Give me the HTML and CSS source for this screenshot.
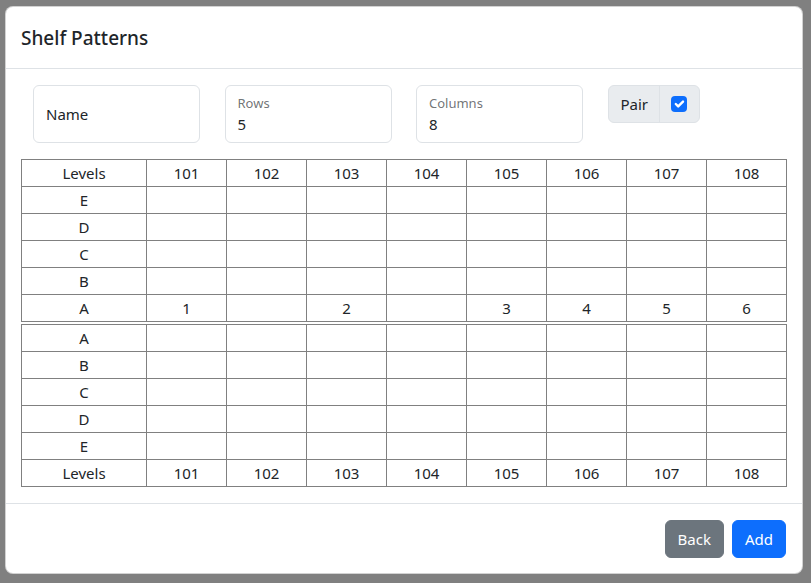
FILE: index.html
```html
<!DOCTYPE html>
<html lang="en">
<head>
<meta charset="utf-8">
<title>Shelf Patterns</title>
<link rel="stylesheet" href="styles.css">
</head>
<body>
<div class="backdrop">
  <div class="modal">
    <div class="modal-header">
      <h5 class="modal-title">Shelf Patterns</h5>
    </div>
    <div class="modal-body">
      <div class="fields">
        <div class="field field-empty"><span class="field-placeholder">Name</span></div>
        <div class="field"><div class="field-label">Rows</div><div class="field-value">5</div></div>
        <div class="field"><div class="field-label">Columns</div><div class="field-value">8</div></div>
        <div class="input-group">
          <span class="group-text">Pair</span>
          <span class="group-check">
            <span class="checkbox">
              <svg viewBox="0 0 20 20" width="16" height="16"><path d="M6 10l3 3 6-6" fill="none" stroke="#fff" stroke-width="3" stroke-linecap="round" stroke-linejoin="round"/></svg>
            </span>
          </span>
        </div>
      </div>
      <table class="shelf">
        <tr><td class="lvl">Levels</td><td>101</td><td>102</td><td>103</td><td>104</td><td>105</td><td>106</td><td>107</td><td>108</td></tr>
        <tr><td class="lvl">E</td><td></td><td></td><td></td><td></td><td></td><td></td><td></td><td></td></tr>
        <tr><td class="lvl">D</td><td></td><td></td><td></td><td></td><td></td><td></td><td></td><td></td></tr>
        <tr><td class="lvl">C</td><td></td><td></td><td></td><td></td><td></td><td></td><td></td><td></td></tr>
        <tr><td class="lvl">B</td><td></td><td></td><td></td><td></td><td></td><td></td><td></td><td></td></tr>
        <tr><td class="lvl">A</td><td>1</td><td></td><td>2</td><td></td><td>3</td><td>4</td><td>5</td><td>6</td></tr>
      </table>
      <table class="shelf shelf-bottom">
        <tr><td class="lvl">A</td><td></td><td></td><td></td><td></td><td></td><td></td><td></td><td></td></tr>
        <tr><td class="lvl">B</td><td></td><td></td><td></td><td></td><td></td><td></td><td></td><td></td></tr>
        <tr><td class="lvl">C</td><td></td><td></td><td></td><td></td><td></td><td></td><td></td><td></td></tr>
        <tr><td class="lvl">D</td><td></td><td></td><td></td><td></td><td></td><td></td><td></td><td></td></tr>
        <tr><td class="lvl">E</td><td></td><td></td><td></td><td></td><td></td><td></td><td></td><td></td></tr>
        <tr><td class="lvl">Levels</td><td>101</td><td>102</td><td>103</td><td>104</td><td>105</td><td>106</td><td>107</td><td>108</td></tr>
      </table>
    </div>
    <div class="modal-footer">
      <button class="btn btn-secondary">Back</button>
      <button class="btn btn-primary">Add</button>
    </div>
  </div>
</div>
</body>
</html>
```

FILE: styles.css
```css
* { box-sizing: border-box; }
html, body { margin: 0; padding: 0; }
body {
  font-family: "Noto Sans", "Open Sans", sans-serif;
  font-size: 16px;
  line-height: 1.5;
  color: #212529;
  background: #808080;
  width: 811px;
  height: 583px;
  overflow: hidden;
}
.backdrop {
  padding: 6px 8px 0 5px;
}
.modal {
  width: 798px;
  height: 568px;
  background: #fff;
  border: 1px solid rgba(0,0,0,.175);
  border-radius: 8px;
  display: flex;
  flex-direction: column;
}
.modal-header {
  padding: 16px 16px 15px 15px;
  border-bottom: 1px solid #dee2e6;
}
.modal-title {
  margin: 0;
  font-size: 19px;
  font-weight: 500;
  line-height: 30px;
  color: #212529;
}
.modal-body {
  padding: 16px 15px 16px 15px;
  flex: 1;
}
.fields {
  display: flex;
  gap: 24.5px;
  padding-left: 12px;
  margin-bottom: 16px;
  align-items: flex-start;
}
.field {
  width: 167px;
  height: 58px;
  border: 1px solid #dee2e6;
  border-radius: 6px;
  padding: 8px 12px 0 12px;
}
.field-empty {
  display: flex;
  align-items: center;
  padding: 0 12px;
}
.field-placeholder { font-size: 15px; }
.field-label {
  font-size: 13px;
  line-height: 18px;
  color: rgba(33,37,41,.65);
}
.field-value {
  font-size: 15px;
  line-height: 24px;
}
.input-group {
  display: flex;
  height: 38px;
  border: 1px solid #dee2e6;
  border-radius: 6px;
  background: #e9ecef;
}
.group-text {
  display: flex;
  align-items: center;
  padding: 0 12px;
  font-size: 15px;
  border-right: 1px solid #dee2e6;
  width: 51px;
}
.group-check {
  display: flex;
  align-items: center;
  padding: 0 12px 0 11px;
}
.checkbox {
  width: 16px;
  height: 16px;
  border-radius: 4px;
  background: #0d6efd;
  display: flex;
}
.shelf {
  width: 766px;
  border-collapse: collapse;
  table-layout: fixed;
  font-size: 15px;
}
.shelf td {
  border: 1px solid #808080;
  height: 27px;
  padding: 0;
  text-align: center;
  width: 80px;
  line-height: 25px;
}
.shelf td.lvl { width: 125px; }
.shelf-bottom { margin-top: 2px; }
.modal-footer {
  border-top: 1px solid #dee2e6;
  padding: 12px;
  display: flex;
  justify-content: flex-end;
  gap: 8px;
}
.btn {
  font-family: inherit;
  font-size: 15px;
  line-height: 24px;
  border: 1px solid transparent;
  border-radius: 6px;
  padding: 6px 12px;
  margin: 4px;
  color: #fff;
  cursor: pointer;
}
.btn + .btn { margin-left: -4px; }
.btn-secondary { background: #6c757d; border-color: #6c757d; }
.btn-primary { background: #0d6efd; border-color: #0d6efd; }
```
